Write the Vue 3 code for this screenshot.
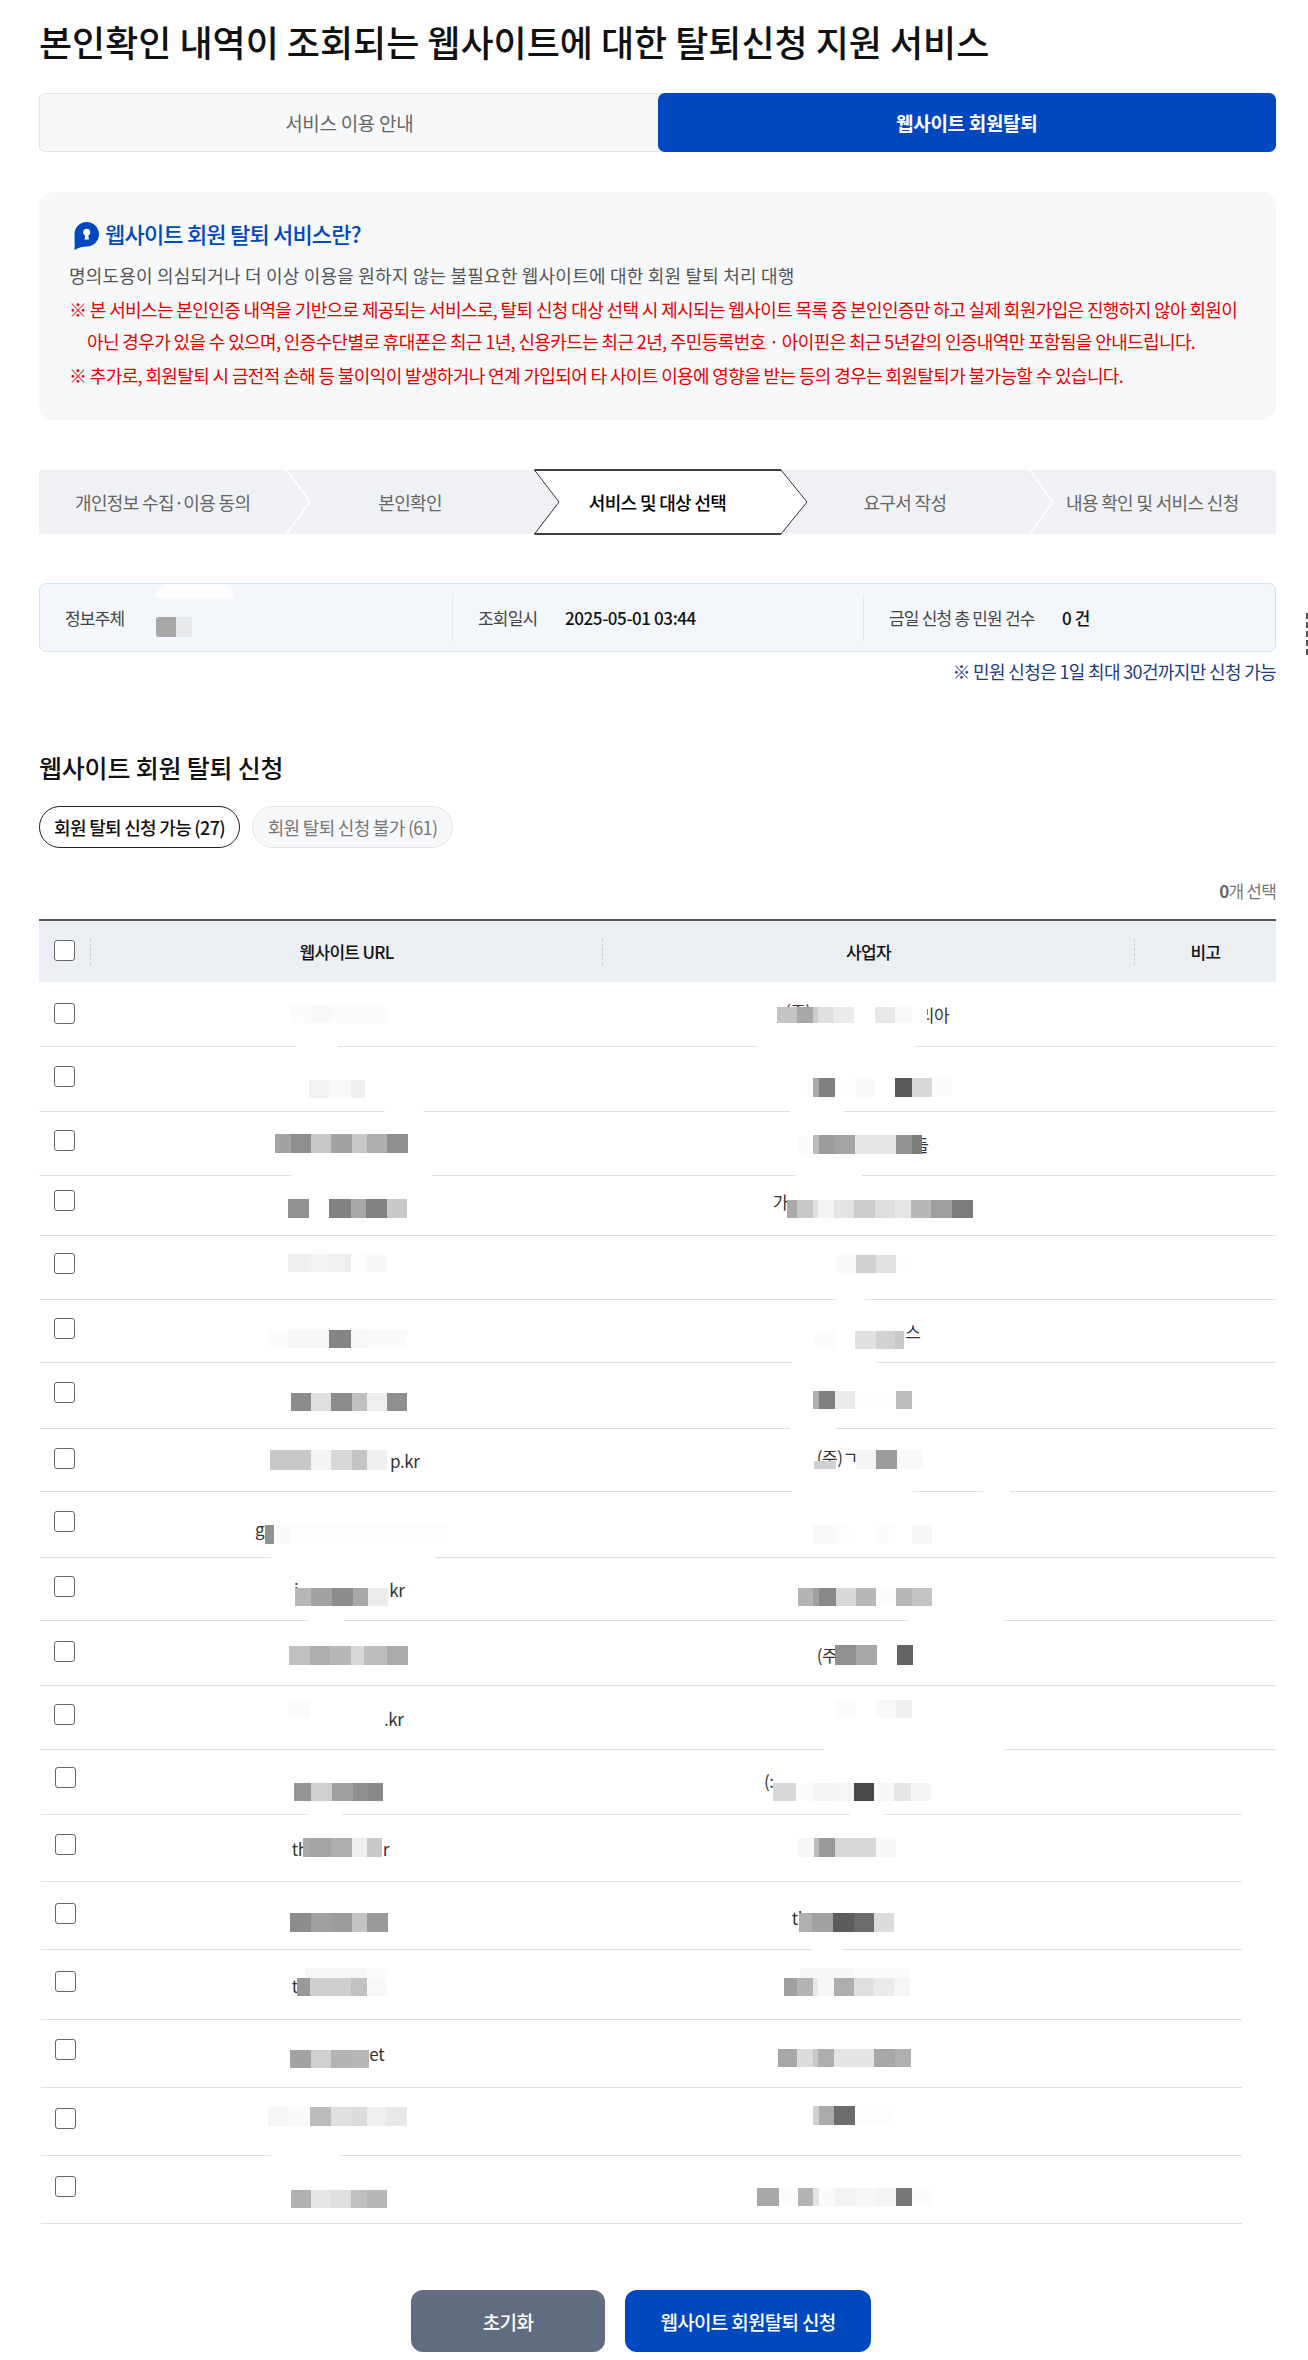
<script setup>
const lines = [1046,1111,1175,1235,1299,1362,1428,1491,1557,1620,1685,1749,1814,1881,1949,2019,2087,2155,2223]
const checks = [1003,1066,1130,1190,1253,1318,1382,1448,1511,1576,1641,1704,1767,1834,1903,1971,2039,2108,2176]
const raw = [
  { u:[[120,1005,18,[[182,'fc'],[245,'f9'],[410,'fb']]]], c:[[82,1007,16,[[142,'c4'],[188,'a8'],[205,'cc'],[252,'e0'],[313,'eb'],[375,''],[436,'e8'],[485,'f9'],[530,'fd']]]],
    cf:[['(주)',105,1011],['리아',506,1015]], gaps:[[296,338],[757,915]] },
  { u:[[178,1080,18,[[238,'f2'],[302,'f9'],[345,'ee']]]], c:[[143,1078,19,[[190,'fd'],[207,'aa'],[255,'80'],[315,'fd'],[375,'f9'],[436,''],[485,'5a'],[545,'d8'],[605,'fb']]]], gaps:[[385,423],[790,843]] },
  { u:[[75,1134,19,[[122,'a3'],[183,'8f'],[243,'c8'],[307,'a3'],[352,'c8'],[412,'ae'],[473,'8f']]]], c:[[143,1135,19,[[190,'fc'],[207,'bb'],[255,'9c'],[316,'a4'],[376,'e6'],[437,'e6'],[485,'94'],[515,'7c']]]],
    cf:[['들',490,1145]], gaps:[[292,432],[796,862]] },
  { u:[[115,1199,19,[[177,'90'],[238,''],[302,'82'],[348,'a8'],[410,'82'],[470,'c8']]]], c:[[112,1200,18,[[140,'aa'],[188,'c8'],[205,'e0'],[252,'f3'],[313,'e4'],[374,'cc'],[436,'de'],[482,'e6'],[544,'b8'],[605,'a0'],[668,'7c']]]],
    cf:[['가',68,1202]] },
  { u:[[115,1254,18,[[178,'ef'],[238,'f3'],[302,'f0'],[348,'fd'],[408,'f8']]]], c:[[257,1255,18,[[317,'f9'],[378,'d0'],[438,'e2'],[485,'fd']]]], gaps:[[835,865]] },
  { u:[[55,1330,18,[[115,'fc'],[238,'f8'],[302,'84'],[348,'f8'],[470,'fa']]]], c:[[192,1331,18,[[255,'fc'],[316,''],[377,'e0'],[436,'d2'],[462,'c8']]]],
    cf:[['스',466,1332]], gaps:[[793,877]] },
  { u:[[122,1393,18,[[183,'8c'],[243,'e0'],[307,'8c'],[352,'c0'],[412,'ee'],[472,'8f']]]], c:[[190,1391,18,[[207,'b0'],[255,'80'],[315,'eb'],[375,'fd'],[437,'fd'],[485,'be']]]], gaps:[[790,835]] },
  { u:[[60,1450,20,[[182,'c8'],[243,'f3'],[306,'d8'],[352,'c4'],[412,'ef']]]], uf:[['p.kr',420,1461]],
    c:[[192,1461,8,[[257,'d0']]],[318,1450,19,[[378,'f4'],[440,'9c'],[520,'f9']]]], cf:[['(주)ㄱ',200,1457]], gaps:[[793,913],[983,1010]] },
  { u:[[45,1525,19,[[72,'90'],[120,'fa'],[240,'fd'],[600,'fd']]]], uf:[['gs',15,1529]], c:[[190,1525,19,[[255,'f9'],[312,'fd'],[376,''],[436,'fc'],[485,''],[545,'f8']]]], gaps:[[271,435]] },
  { u:[[135,1588,18,[[183,'b8'],[245,'a3'],[308,'8c'],[355,'a8'],[415,'ec']]]], uf:[['i',132,1590],['kr',418,1590]], c:[[145,1588,18,[[190,'b4'],[207,'a0'],[257,'88'],[317,'d8'],[378,'b8'],[437,'fc'],[485,'b8'],[546,'c4']]]], gaps:[[307,343],[908,1004]] },
  { u:[[116,1646,19,[[180,'c0'],[240,'ae'],[303,'b8'],[342,'d8'],[412,'bd'],[473,'aa']]]], c:[[255,1645,20,[[318,'90'],[380,'a8'],[442,''],[490,'64']]]], cf:[['(주',200,1655]] },
  { u:[[115,1700,18,[[180,'fb']]]], uf:[['.kr',402,1719]], c:[[255,1700,18,[[317,'fb'],[378,''],[438,'f9'],[487,'ef']]]], gaps:[[825,1005]] },
  { u:[[133,1783,18,[[183,'95'],[245,'d0'],[308,'a0'],[354,'8e'],[398,'88']]]], c:[[70,1783,18,[[138,'d8'],[190,'fc'],[250,'f4'],[312,'f6'],[373,'48'],[433,'f8'],[482,'e6'],[543,'f4']]]],
    cf:[['(:',42,1781]], gaps:[[308,342],[850,885]] },
  { u:[[158,1838,19,[[182,'aa'],[243,'a5'],[306,'ae'],[352,'ee'],[395,'c8']]]], uf:[['th',125,1849],['r',398,1849]], c:[[145,1838,19,[[192,'f6'],[208,'bb'],[256,'99'],[378,'d8'],[438,'f8']]]] },
  { u:[[120,1913,19,[[183,'8c'],[243,'a0'],[306,'9c'],[352,'c4'],[413,'99']]]], c:[[148,1913,19,[[186,'b0'],[250,'a2'],[312,'5c'],[373,'6c'],[433,'dc']]]], cf:[['ti',125,1918]], gaps:[[812,842]] },
  { u:[[165,1968,10,[[350,'f6'],[410,'fc']]],[140,1978,18,[[181,'99'],[240,'cf'],[303,'cf'],[350,'c2'],[410,'f9']]]], uf:[['t',125,1986]],
    c:[[150,1968,10,[[312,'f8'],[480,'fc']]],[102,1978,18,[[140,'a0'],[188,'b4'],[205,'e8'],[252,'f6'],[312,'ae'],[373,'e0'],[433,'eb'],[480,'f6']]]], cf:[['s',105,1985]] },
  { u:[[120,2050,18,[[182,'a3'],[243,'d0'],[306,'b3'],[358,'b8']]]], uf:[['et',358,2054]], c:[[83,2049,18,[[141,'a8'],[188,'dc'],[205,'c8'],[252,'ae'],[373,'e4'],[434,'a8'],[482,'b0']]]] },
  { u:[[55,2107,19,[[118,'f6'],[181,'fa'],[243,'bb'],[303,'e0'],[352,'dc'],[408,'ef'],[472,'e8']]]], c:[[188,2106,19,[[206,'d0'],[253,'ab'],[315,'6c'],[430,'fd']]]], gaps:[[271,340]] },
  { u:[[122,2190,18,[[183,'b0'],[243,'e6'],[303,'e0'],[352,'c0'],[410,'b8']]]], c:[[22,2188,18,[[86,'a8'],[143,'fc'],[190,'b4'],[208,'e4'],[254,'fa'],[317,'f2'],[375,'f8'],[438,'f4'],[485,'78'],[545,'fc']]]] },
]

const mosaics = (list, base, top) => (list || []).map(([z, y, h, segs]) => {
  let prev = z
  const parts = segs.map(([end, g]) => {
    const p = { w: (end - prev) / 3, bg: g ? '#' + g + g + g : 'transparent' }
    prev = end
    return p
  })
  return { style: { marginLeft: base + z / 3 + 'px', marginTop: y - top + 'px', height: h + 'px' }, parts }
})
const frags = (list, base, top) => (list || []).map(([t, z, cy]) => ({
  t, style: { paddingLeft: base + z / 3 + 'px', paddingTop: cy - 12 - top + 'px' }
}))

const rows = raw.map((r, i) => {
  const top = i === 0 ? 982 : lines[i - 1] + 1
  const narrow = i >= 12
  const left = narrow ? 41 : 39
  return {
    narrow,
    height: lines[i] - top + 1,
    ckTop: checks[i] - top,
    um: mosaics(r.u, 160, top), uf: frags(r.uf, 160, top),
    cm: mosaics(r.c, 148, top), cf: frags(r.cf, 148, top),
    gaps: (r.gaps || []).map(([a, b]) => ({ left: a - left + 'px', width: b - a + 'px' })),
  }
})
const steps = ['개인정보 수집·이용 동의', '본인확인', '서비스 및 대상 선택', '요구서 작성', '내용 확인 및 서비스 신청']
</script>

<template>
  <div class="page">
    <h1 class="title">본인확인 내역이 조회되는 웹사이트에 대한 탈퇴신청 지원 서비스</h1>

    <div class="tabs">
      <div class="tab">서비스 이용 안내</div>
      <div class="tab on">웹사이트 회원탈퇴</div>
    </div>

    <section class="panel">
      <div class="panel-title">
        <svg class="key" width="25" height="28" viewBox="0 0 25 28">
          <path d="M12.7 0C19.4 0 25 5.4 25 12.2S19.5 24.400 12.700 24.400C9 24.400 4.500 25.300 0.300 28 1 25 0.600 22 0.500 12.400 0.400 5.500 6 0 12.700 0Z" fill="#0048c0"/>
          <circle cx="12.700" cy="10.300" r="3.500" fill="#fff"/>
          <path d="M11.500 11.500H13.900L15 17.500H10.400Z" fill="#fff"/>
        </svg>
        <span class="panel-label">웹사이트 회원 탈퇴 서비스란?</span>
      </div>
      <p class="desc">명의도용이 의심되거나 더 이상 이용을 원하지 않는 불필요한 웹사이트에 대한 회원 탈퇴 처리 대행</p>
      <p class="warn first">※ 본 서비스는 본인인증 내역을 기반으로 제공되는 서비스로, 탈퇴 신청 대상 선택 시 제시되는 웹사이트 목록 중 본인인증만 하고 실제 회원가입은 진행하지 않아 회원이 아닌 경우가 있을 수 있으며, 인증수단별로 휴대폰은 최근 1년, 신용카드는 최근 2년, 주민등록번호 · 아이핀은 최근 5년같의 인증내역만 포함됨을 안내드립니다.</p>
      <p class="warn last">※ 추가로, 회원탈퇴 시 금전적 손해 등 불이익이 발생하거나 연계 가입되어 타 사이트 이용에 영향을 받는 등의 경우는 회원탈퇴가 불가능할 수 있습니다.</p>
    </section>

    <div class="steps">
      <div v-for="(s, i) in steps" :key="s" class="step" :class="{ active: i === 2 }">
        <svg v-if="i === 2" class="shape" width="276" height="66" viewBox="0 0 276 66">
          <path d="M0.500 1H247L273 33 247 65H0.500L25 33Z" fill="#fff"/>
          <path d="M0.500 1H247M247 65H0.500" stroke="#000" stroke-width="1.500" fill="none"/>
          <path d="M0.500 1L25 33 0.500 65M247 1L273 33 247 65" stroke="#333" stroke-width="1" fill="none"/>
        </svg>
        <svg v-else-if="i !== 1 && i !== 4" class="sep" width="26" height="64" viewBox="0 0 26 64">
          <path d="M0.500 0L24 32 0.500 64" stroke="#fff" stroke-width="1.500" fill="none"/>
        </svg>
        <span class="step-text">{{ s }}</span>
      </div>
    </div>

    <div class="info">
      <div class="info-cell">
        <span class="label l1">정보주체</span>
        <span class="redact"><i class="r1"></i><i class="r2"></i></span>
      </div>
      <div class="info-cell">
        <span class="label l2">조회일시</span>
        <span class="value">2025-05-01 03:44</span>
      </div>
      <div class="info-cell">
        <span class="label l3">금일 신청 총 민원 건수</span>
        <span class="value">0 건</span>
      </div>
      <span class="smudge"></span>
    </div>
    <p class="notice">※ 민원 신청은 1일 최대 30건까지만 신청 가능</p>
    <span class="edge"></span>

    <h2 class="heading">웹사이트 회원 탈퇴 신청</h2>
    <div class="pills">
      <div class="pill on">회원 탈퇴 신청 가능 (27)</div>
      <div class="pill">회원 탈퇴 신청 불가 (61)</div>
    </div>
    <p class="count"><b>0</b>개 선택</p>

    <div class="thead">
      <div class="th-check"><span class="box"></span></div>
      <div class="th">웹사이트 URL</div>
      <div class="th">사업자</div>
      <div class="th">비고</div>
    </div>
    <div v-for="(r, i) in rows" :key="i" class="row" :class="{ narrow: r.narrow }" :style="{ height: r.height + 'px' }">
      <div class="check-cell"><span class="box" :style="{ marginTop: r.ckTop + 'px' }"></span></div>
      <div class="cell">
        <span v-for="f in r.uf" :key="f.t" class="frag" :style="f.style">{{ f.t }}</span>
        <div v-for="(m, k) in r.um" :key="k" class="mosaic" :style="m.style">
          <i v-for="(p, n) in m.parts" :key="n" :style="{ width: p.w + 'px', background: p.bg }"></i>
        </div>
      </div>
      <div class="cell">
        <span v-for="f in r.cf" :key="f.t" class="frag" :style="f.style">{{ f.t }}</span>
        <div v-for="(m, k) in r.cm" :key="k" class="mosaic" :style="m.style">
          <i v-for="(p, n) in m.parts" :key="n" :style="{ width: p.w + 'px', background: p.bg }"></i>
        </div>
      </div>
      <span v-for="(g, n) in r.gaps" :key="'g' + n" class="gap" :style="g"></span>
    </div>

    <div class="actions">
      <button class="btn reset">초기화</button>
      <button class="btn submit">웹사이트 회원탈퇴 신청</button>
    </div>
  </div>
</template>

<style scoped>
.page {
  position: relative;
  box-sizing: border-box;
  width: 1308px;
  height: 2360px;
  padding: 16px 32px 0 39px;
  overflow: hidden;
  background: #fff;
  font-family: "Noto Sans CJK KR", "Noto Sans", sans-serif;
  color: #222;
}
.title { margin: 0; font-size: 36px; line-height: 50px; font-weight: 500; letter-spacing: -0.02px; color: #111; white-space: nowrap; }
.tabs { display: flex; margin-top: 27px; height: 59px; box-sizing: border-box; border: 1px solid #e3e4e6; border-radius: 6px; background: #f7f8fa; }
.tab { flex: 1; display: flex; align-items: center; justify-content: center; font-size: 19px; letter-spacing: -0.3px; color: #666; }
.tab.on { margin: -1px; background: #0048c0; color: #fff; font-weight: 700; border-radius: 7px; }
.panel { margin-top: 40px; height: 228px; box-sizing: border-box; padding: 28px 30px 0; border-radius: 14px; background: #f7f8fa; }
.panel-title { display: flex; align-items: center; gap: 6px; margin-left: 5px; height: 30px; font-size: 22px; font-weight: 500; letter-spacing: -0.8px; color: #0048c0; }
.panel-label { margin-bottom: 4px; }
.key { margin-top: 2px; flex: none; }
.desc { margin: 10px 0 0; font-size: 18px; line-height: 30px; letter-spacing: 0.2px; color: #555; white-space: nowrap; }
.warn { margin: 0; font-size: 18px; line-height: 32px; letter-spacing: -0.62px; color: #e60000; padding-left: 18px; text-indent: -18px; width: 1170px; word-break: keep-all; }
.warn.first { margin-top: 3px; }
.warn.last { margin-top: 2px; white-space: nowrap; }
.steps { display: flex; margin-top: 50px; height: 64px; background: #eff1f5; }
.step { position: relative; flex: 1; display: flex; align-items: center; justify-content: center; font-size: 18px; letter-spacing: -0.65px; color: #666; }
.step.active { color: #000; font-weight: 500; }
.step-text { position: relative; }
.sep { position: absolute; right: -26px; top: 0; z-index: 1; }
.step:last-child .sep { display: none; }
.shape { position: absolute; left: 0; top: -1px; z-index: 2; }
.step.active .step-text { z-index: 3; }
.info { position: relative; display: grid; grid-template-columns: 412px 411px 1fr; align-items: center; margin-top: 49px; height: 69px; box-sizing: border-box; border: 1.5px solid #d5e2f0; border-radius: 7px; background: #f3f7fb; }
.info-cell { display: flex; align-items: center; height: 47px; padding-left: 25px; font-size: 17px; letter-spacing: -0.8px; }
.info-cell + .info-cell { border-left: 1px solid #e3e8ee; }
.label { flex: none; color: #444; }
.l1 { width: 91px; }
.l2 { width: 87px; }
.l3 { width: 173px; }
.value { color: #111; font-weight: 500; letter-spacing: -0.4px; }
.redact { display: flex; height: 20px; margin-top: 18px; }
.redact i { display: block; }
.r1 { width: 20px; background: #a8a8a8; border-radius: 3px 0 0 3px; }
.r2 { width: 16px; background: #e8e9ea; }
.smudge { position: absolute; left: 116px; top: 0; width: 78px; height: 14px; background: #fdfdfe; border-radius: 40px 40px 0 0; }
.notice { margin: 7px 0 0; text-align: right; font-size: 18px; line-height: 24px; letter-spacing: -0.65px; color: #1d3c84; }
.edge { position: absolute; left: 1306px; top: 613px; width: 2px; height: 44px; background: repeating-linear-gradient(#555 0 6px, #fff 6px 9px); }
.heading { margin: 67px 0 0; font-size: 25px; line-height: 34px; font-weight: 500; letter-spacing: -0.2px; color: #111; }
.pills { display: flex; gap: 12px; margin-top: 22px; }
.pill { box-sizing: border-box; width: 201px; height: 42px; display: flex; align-items: center; justify-content: center; border: 1px solid #e4e5e8; border-radius: 21px; background: #f7f8fa; font-size: 18px; letter-spacing: -0.7px; color: #777; white-space: nowrap; }
.pill.on { border-color: #222; background: #fff; color: #111; font-weight: 500; }
.count { margin: 31px 0 0; text-align: right; font-size: 17px; line-height: 24px; letter-spacing: -0.8px; color: #777; }
.count b { font-weight: 700; color: #666; }
.thead { display: grid; grid-template-columns: 51px 512px 532px 1fr; align-items: center; margin-top: 16px; height: 63px; box-sizing: border-box; border-top: 2px solid #555; background: #ebeff3; }
.th-check { padding-left: 15px; display: flex; }
.th { position: relative; display: flex; align-items: center; justify-content: center; height: 26px; border-left: 1px dashed #c9ced4; font-size: 17px; font-weight: 500; letter-spacing: -0.7px; color: #111; }
.th-check .box { margin-top: -2px; }
.box { display: block; box-sizing: border-box; width: 21px; height: 21px; border: 1px solid #666; border-radius: 3px; background: #fff; }
.row { position: relative; display: grid; grid-template-columns: 51px 512px 532px; box-sizing: border-box; border-bottom: 1px solid #e0e1e4; }
.row.narrow { grid-template-columns: 49px 512px 532px; margin-left: 2px; margin-right: 34px; }
.check-cell { padding-left: 15px; }
.row.narrow .check-cell { padding-left: 14px; }
.cell { display: grid; min-width: 0; align-content: start; justify-content: start; }
.frag { grid-area: 1 / 1; font-size: 17px; line-height: 24px; letter-spacing: -0.4px; color: #333; white-space: nowrap; }
.mosaic { grid-area: 1 / 1; display: flex; align-self: start; justify-self: start; }
.mosaic i { display: block; flex: none; height: 100%; }
.gap { position: absolute; bottom: -1px; height: 1px; background: #fff; }
.actions { display: flex; justify-content: flex-start; gap: 20px; margin: 66px 0 0 372px; }
.btn { height: 62px; border: 0; border-radius: 12px; font-family: inherit; font-size: 19px; font-weight: 500; letter-spacing: -0.7px; color: #fff; }
.reset { width: 194px; background: #626c80; }
.submit { width: 246px; background: #0048c0; }
</style>

<style>
html, body { margin: 0; background: #fff; }
</style>
